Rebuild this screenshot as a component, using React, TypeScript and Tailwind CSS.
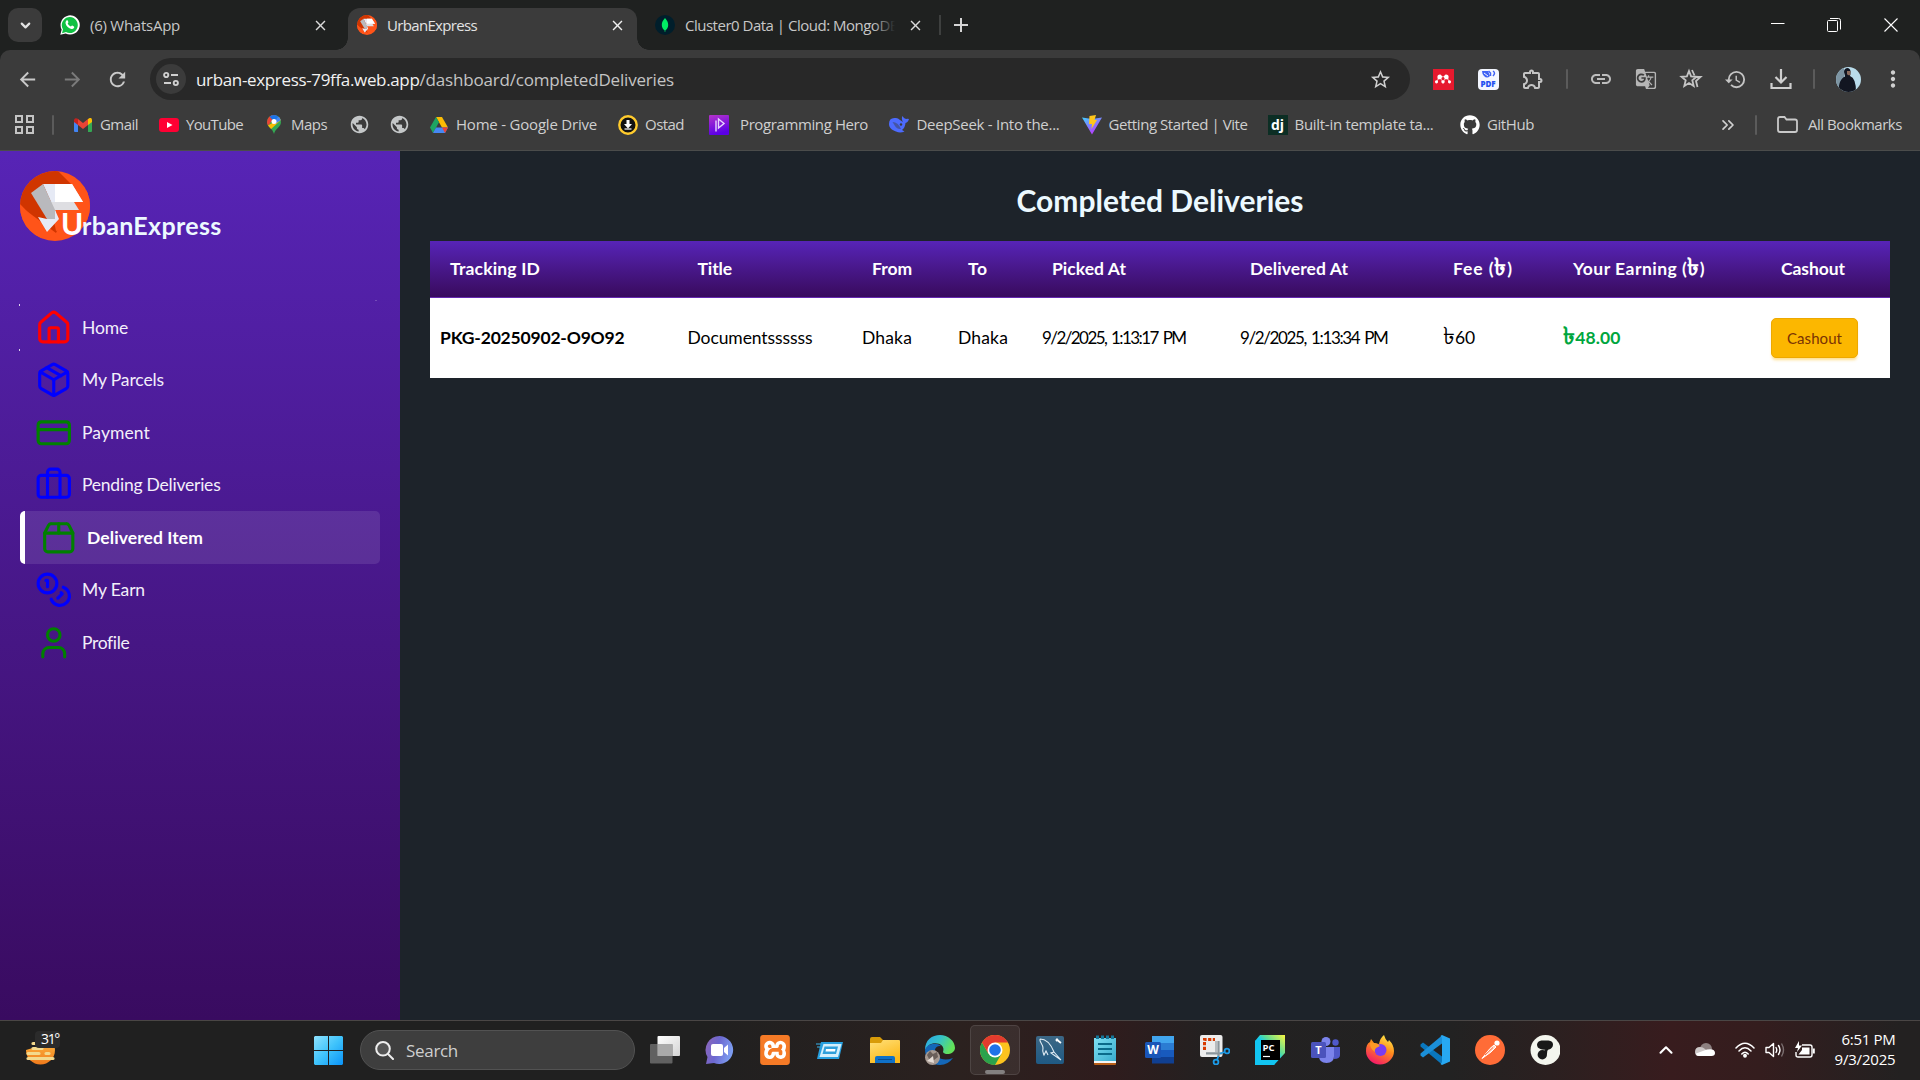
import { useLayoutEffect, useRef, type ReactNode } from "react";
import {
  Briefcase,
  ChevronDown,
  ChevronUp,
  ChevronsRight,
  CreditCard,
  House,
  Package,
  User,
} from "lucide-react";
import { FaGithub } from "react-icons/fa";
import {
  MdArrowBack,
  MdArrowForward,
  MdClose,
  MdHistory,
  MdLink,
  MdMoreVert,
  MdOutlineExtension,
  MdPublic,
  MdRefresh,
  MdStarBorder,
  MdGTranslate,
} from "react-icons/md";
import { SiMendeley, SiXampp } from "react-icons/si";

/** Single line of text whose letter spacing is adjusted so that it spans `w` pixels. */
function Fit({ w, className = "", children }: { w: number; className?: string; children: ReactNode }) {
  const ref = useRef<HTMLSpanElement>(null);
  useLayoutEffect(() => {
    const el = ref.current;
    if (!el) return;
    el.style.letterSpacing = "0px";
    const natural = el.getBoundingClientRect().width;
    const count = Math.max((el.textContent ?? "").length, 1);
    el.style.letterSpacing = `${(w - natural) / count}px`;
  }, [w]);
  return (
    <span className={`block shrink-0 whitespace-nowrap ${className}`} style={{ width: w }}>
      <span ref={ref} className="inline-block whitespace-pre">
        {children}
      </span>
    </span>
  );
}

function UrbanLogo({ size }: { size: number }) {
  return (
    <svg width={size} height={size} viewBox="0 0 70 70" className="block shrink-0">
      <defs>
        <clipPath id="urban-circle">
          <circle cx="35" cy="35" r="35" />
        </clipPath>
      </defs>
      <g clipPath="url(#urban-circle)">
        <rect width="70" height="70" fill="#ff5419" />
        <path d="M0 0H38L56 18L36 62L0 35Z" fill="#d03500" />
        <path d="M0 33L32 66L0 70Z" fill="#ff5419" />
        <path d="M30 31L36 60L70 50V20L54 16Z" fill="#ff5419" />
        <path d="M30 31H54L59 39H34Z" fill="#dedee2" />
        <path d="M23 13H52L63 31H31Z" fill="#e6eaf5" />
        <path d="M35 13H52L63 31H35Z" fill="#fff" />
        <path d="M11 22L23 13L36 41V48H27Z" fill="#b9b9bd" />
        <path d="M18 46L27 48H35V39L39 48L27 61Z" fill="#e6eaf5" />
      </g>
    </svg>
  );
}

/* ------------------------------ browser ------------------------------ */

function MongoIcon() {
  return (
    <svg width="20" height="20" viewBox="0 0 20 20" className="shrink-0">
      <circle cx="10" cy="10" r="10" fill="#001e2b" />
      <path d="M10 3c2 2.300 3.200 4.200 3.200 7 0 2.700-1.300 4.200-2.800 5.300L10.200 17h-.4l-.2-1.700C8.100 14.200 6.800 12.700 6.800 10c0-2.800 1.200-4.700 3.200-7z" fill="#00ed64" />
    </svg>
  );
}

function TabStrip() {
  return (
    <div className="flex h-[50px] items-end bg-[#1f2120] text-[15px]">
      <div className="mb-[8px] ml-[8px] flex h-[34px] w-[34px] shrink-0 items-center justify-center rounded-[10px] bg-[#3b3b3b]">
        <ChevronDown size={15} strokeWidth={3.5} color="#e3e3e3" />
      </div>
      <div className="flex h-[42px] w-[306px] items-center pb-[8px] pl-[18px]">
        <svg width="20" height="20" viewBox="0 0 20 20" className="shrink-0">
          <path d="M0.300 19.800L1.700 14.500A9.600 9.600 0 1 1 5.600 18.400Z" fill="#fff" />
          <path d="M2 18.200L3 14.300A8 8 0 1 1 6 17.100Z" fill="#10c143" />
          <path d="M6.500 5.400c.4-.4 1-.3 1.200.1l.7 1.600c.1.300 0 .6-.7 1.300.7 1.400 1.700 2.400 3.300 3.100.8-1 1-1 1.300-.9l1.600.8c.5.300.3 1.200 0 1.600-.5.700-1.500 1.100-2.400.9-3-.7-5.200-2.800-5.900-5.500-.3-1 .2-2.300.9-3z" fill="#fff" />
        </svg>
        <Fit w={90} className="ml-[10px] text-[#c7c7c7]">(6) WhatsApp</Fit>
        <MdClose size={17} color="#dadada" className="ml-[132px]" />
      </div>
      <div className="relative flex h-[42px] w-[289px] items-center rounded-t-[12px] bg-[#3b3b3b] pb-[8px] pl-[9px]">
        <span className="absolute -left-[12px] bottom-0 h-[12px] w-[12px] bg-[radial-gradient(circle_at_0_0,#1f2120_11.5px,#3b3b3b_12px)]" />
        <span className="absolute -right-[12px] bottom-0 h-[12px] w-[12px] bg-[radial-gradient(circle_at_100%_0,#1f2120_11.5px,#3b3b3b_12px)]" />
        <UrbanLogo size={20} />
        <Fit w={90} className="ml-[10px] text-[#e3e3e3]">UrbanExpress</Fit>
        <MdClose size={17} color="#f0f0f0" className="ml-[132px]" />
      </div>
      <div className="flex h-[42px] items-center pb-[8px] pl-[18px]">
        <MongoIcon />
        <div className="relative ml-[10px] w-[210px] overflow-hidden">
          <Fit w={214} className="text-[#c7c7c7]">{"Cluster0 Data | Cloud: MongoDB"}</Fit>
          <span className="absolute inset-y-0 right-0 w-[22px] bg-linear-to-r from-transparent to-[#1f2120]" />
        </div>
        <MdClose size={17} color="#dadada" className="ml-[12px]" />
        <span className="ml-[15px] h-[20px] w-[2px] bg-[#3e403f]" />
        <svg width="14" height="14" viewBox="0 0 14 14" className="ml-[13px]">
          <path d="M7 0V14M0 7H14" stroke="#d5d5d5" strokeWidth="2" />
        </svg>
      </div>
      <div className="mb-[18px] ml-auto mr-[22px] flex items-center">
        <svg width="14" height="14" viewBox="0 0 14 14">
          <path d="M0 5.500H13.500" stroke="#fff" />
        </svg>
        <svg width="14" height="14" viewBox="0 0 14 14" className="ml-[42px]" fill="none" stroke="#fff">
          <rect x="0.500" y="2.500" width="10" height="11" rx="1" />
          <path d="M3 0.500H11.500Q13.500 0.500 13.500 2.500V11.500" />
        </svg>
        <svg width="14" height="14" viewBox="0 0 14 14" className="ml-[43px]">
          <path d="M0.500 0.500L13.500 13.500M13.500 0.500L0.500 13.500" stroke="#fff" strokeWidth="1.100" />
        </svg>
      </div>
    </div>
  );
}

function Cell({ children }: { children?: ReactNode }) {
  return <span className="flex h-[42px] w-[45px] shrink-0 items-center justify-center">{children}</span>;
}

function Separator() {
  return (
    <span className="flex w-[22.5px] shrink-0 justify-center">
      <span className="h-[20px] w-[2px] rounded bg-[#5b5b5b]" />
    </span>
  );
}

function Toolbar() {
  return (
    <div className="bg-[#1f2120]">
      <div className="flex h-[58px] items-center rounded-t-[10px] bg-[#3b3b3b]">
        <div className="flex w-[150px] shrink-0 items-center">
          <MdArrowBack size={23} color="#c9c9c9" className="ml-[16px]" />
          <MdArrowForward size={23} color="#7b7b7b" className="ml-[22px]" />
          <MdRefresh size={23} color="#c9c9c9" className="ml-[22px]" />
        </div>
        <div className="flex h-[42px] w-[1260px] shrink-0 items-center rounded-full bg-[#282828] pl-[6px] pr-[18px]">
          <span className="flex h-[30px] w-[30px] items-center justify-center rounded-full bg-[#3b3b3b]">
            <svg width="16" height="16" viewBox="0 0 16 16" fill="none" stroke="#d0d0d0" strokeWidth="1.900">
              <circle cx="3.200" cy="4" r="2.100" />
              <path d="M8 4H15M1 12H8" />
              <circle cx="12.800" cy="12" r="2.100" />
            </svg>
          </span>
          <Fit w={223.5} className="ml-[10px] pt-px text-[17px] text-[#f1f1f1]">urban-express-79ffa.web.app</Fit>
          <Fit w={254.5} className="pt-px text-[17px] text-[#c4c4c4]">/dashboard/completedDeliveries</Fit>
          <MdStarBorder size={23} color="#d0d0d0" className="ml-auto" />
        </div>
        <div className="ml-[10.5px] flex items-center">
          <Cell>
            <span className="flex h-[21px] w-[21px] items-center justify-center bg-[#e6192e]">
              <SiMendeley size={16} color="#fff" />
            </span>
          </Cell>
          <Cell>
            <span className="flex h-[21px] w-[21px] flex-col items-center justify-end rounded-[4px] bg-[#f3f6ff] pb-[2px]">
              <svg width="17" height="9" viewBox="0 0 17 9">
                <path d="M2 1H8L10 6Q7 9 4 6Q2 4 2 1Z" fill="#3f62f4" />
                <path d="M4 3L8 6" stroke="#f3f6ff" strokeWidth="1" />
                <path d="M8.500 1L10.500 3V6M13 1Q16 3 13 6" stroke="#3f62f4" fill="none" strokeWidth="1.500" />
              </svg>
              <span className="text-[8px] leading-[9px] font-extrabold text-[#2450f0]">PDF</span>
            </span>
          </Cell>
          <Cell>
            <MdOutlineExtension size={24} color="#c4c4c4" />
          </Cell>
          <Separator />
          <Cell>
            <MdLink size={24} color="#bdbdbd" />
          </Cell>
          <Cell>
            <MdGTranslate size={22} color="#b5b5b5" />
          </Cell>
          <Cell>
            <svg width="24" height="22" viewBox="0 0 24 22" fill="none" stroke="#c4c4c4" strokeWidth="1.800">
              <path d="M10 3L12.100 8.400L17.500 8.800L13.300 12.300L14.700 18L10 15L5.300 18L6.700 12.300L2.500 8.800L7.900 8.400Z" />
              <path d="M13 2L15.500 7.500M16.500 9H21.500L17 13L18.500 19" />
            </svg>
          </Cell>
          <Cell>
            <MdHistory size={23} color="#c4c4c4" />
          </Cell>
          <Cell>
            <svg width="22" height="22" viewBox="0 0 22 22" fill="none" stroke="#cfcfcf" strokeWidth="2.200">
              <path d="M11 1V14M5.500 9L11 14.500L16.500 9M1.500 15V20H20.500V15" />
            </svg>
          </Cell>
          <Separator />
          <Cell>
            <svg width="25" height="25" viewBox="0 0 25 25">
              <defs>
                <clipPath id="avatar">
                  <circle cx="12.500" cy="12.500" r="12.500" />
                </clipPath>
              </defs>
              <g clipPath="url(#avatar)">
                <rect width="25" height="25" fill="#b9dceb" />
                <path d="M0 0H8V25H0Z" fill="#7d95a3" />
                <path d="M3 25C2 17 5 11 9 9.500L8 5Q8 1 12 1Q15 2 14.500 6L14 9Q20 11 20 25Z" fill="#121621" />
                <path d="M11 4H14.500V8Q12 9 11 7Z" fill="#8a6a5c" />
              </g>
            </svg>
          </Cell>
          <Cell>
            <MdMoreVert size={26} color="#cfcfcf" />
          </Cell>
        </div>
      </div>
    </div>
  );
}

function BookmarkBar() {
  const t = "text-[15px] text-[#cfcfcf]";
  return (
    <div className="flex h-[43px] items-center border-b border-[#4b4c4b] bg-[#3b3b3b] pb-[9px]">
      <svg width="19" height="19" viewBox="0 0 19 19" className="ml-[15px]" fill="none" stroke="#c4c4c4" strokeWidth="2">
        <rect x="1" y="1" width="6" height="6" />
        <rect x="12" y="1" width="6" height="6" />
        <rect x="1" y="12" width="6" height="6" />
        <rect x="12" y="12" width="6" height="6" />
      </svg>
      <span className="ml-[18px] h-[20px] w-[2px] rounded bg-[#5b5b5b]" />
      <svg width="18" height="14" viewBox="0 0 18 14" className="ml-[20px]">
        <path d="M0 2V13Q0 14 1 14H4V6Z" fill="#4285f4" />
        <path d="M18 2V13Q18 14 17 14H14V6Z" fill="#34a853" />
        <path d="M0 2Q.5-.8 3.300.6L4 1V7L0 4Z" fill="#c5221f" />
        <path d="M4 1L9 5L14 1V7L9 11L4 7Z" fill="#ea4335" />
        <path d="M14 1Q17-1.500 18 1.500V4L14 7Z" fill="#fbbc04" />
      </svg>
      <Fit w={38} className={`ml-[8px] ${t}`}>Gmail</Fit>
      <svg width="20" height="14" viewBox="0 0 20 14" className="ml-[21px]">
        <rect width="20" height="14" rx="3" fill="#ff0033" />
        <path d="M8 4V10L13.500 7Z" fill="#fff" />
      </svg>
      <Fit w={57} className={`ml-[7px] ${t}`}>YouTube</Fit>
      <svg width="14" height="19" viewBox="0 0 14 19" className="ml-[24px]">
        <defs>
          <clipPath id="pin">
            <path d="M7 0A7 7 0 0 1 14 7C14 12 8.500 13 7 19C5.500 13 0 12 0 7A7 7 0 0 1 7 0Z" />
          </clipPath>
        </defs>
        <g clipPath="url(#pin)">
          <rect width="14" height="19" fill="#34a853" />
          <path d="M0 12L9 1V-2H-2V12Z" fill="#ea4335" />
          <path d="M3 2L7 7L14 2V0H3Z" fill="#1a73e8" />
          <path d="M7 7L14 0V5L3 15L0 11Z" fill="#fbbc04" />
          <path d="M7 7L11 2L14 3V5L8 9Z" fill="#4285f4" />
        </g>
        <circle cx="7" cy="6.500" r="2.500" fill="#fff" />
      </svg>
      <Fit w={36} className={`ml-[10px] ${t}`}>Maps</Fit>
      <MdPublic size={21} color="#c4c7c8" className="ml-[21.5px] shrink-0" />
      <MdPublic size={21} color="#c4c7c8" className="ml-[19px] shrink-0" />
      <svg width="18" height="16" viewBox="0 0 18 16" className="ml-[20.5px]">
        <path d="M6 0H12L18 10.500H12Z" fill="#fbbc04" />
        <path d="M6 0L9 5.300L3 16L0 10.500Z" fill="#1da462" />
        <path d="M6 10.500H18L15 16H3Z" fill="#4688f4" />
        <path d="M12 10.500H18L15 16Z" fill="#ea4335" />
      </svg>
      <Fit w={141} className={`ml-[8px] ${t}`}>Home - Google Drive</Fit>
      <svg width="20" height="20" viewBox="0 0 20 20" className="ml-[21px]">
        <circle cx="10" cy="10" r="8.700" fill="#111" stroke="#ffcb2d" strokeWidth="2.400" />
        <path d="M8.500 5H11.500V9H14L10 13.500L6 9H8.500Z" fill="#fff" />
        <path d="M6.500 14H13.500" stroke="#fff" strokeWidth="1.200" />
      </svg>
      <Fit w={39} className={`ml-[7px] ${t}`}>Ostad</Fit>
      <svg width="20" height="20" viewBox="0 0 20 20" className="ml-[25px]">
        <defs>
          <linearGradient id="ph" x2="0.300" y2="1">
            <stop stopColor="#b534c9" />
            <stop offset="1" stopColor="#5a00e6" />
          </linearGradient>
        </defs>
        <rect width="20" height="20" rx="1" fill="url(#ph)" />
        <path d="M7 5.500V16.500M9.500 4L15 8.500L9.500 13Z" stroke="#e8d5ff" strokeWidth="1.400" fill="none" />
      </svg>
      <Fit w={128} className={`ml-[11px] ${t}`}>Programming Hero</Fit>
      <svg width="20" height="17" viewBox="0 0 20 17" className="ml-[21px]">
        <path d="M0 8Q0 1 7 2Q9 2 11 4L14 6Q12 3 13.500 0Q15 3 17 3Q18.500 2.500 20 3Q19 6.500 16.500 7Q16 12 13 14L15.500 15.500Q11 17.500 7 15.500C2 14 0 11 0 8Z" fill="#4d6bfe" />
        <path d="M3.500 6Q9 6 12 13Q8 13.500 6 10Z" fill="#3b3b3b" opacity=".45" />
        <circle cx="12" cy="8.500" r="1.200" fill="#3b3b3b" />
      </svg>
      <Fit w={143} className={`ml-[7.5px] ${t}`}>DeepSeek - Into the...</Fit>
      <svg width="20" height="20" viewBox="0 0 20 20" className="ml-[22px]">
        <defs>
          <linearGradient id="vite" x2="0.600" y2="1">
            <stop stopColor="#41d1ff" />
            <stop offset="1" stopColor="#bd34fe" />
          </linearGradient>
        </defs>
        <path d="M0 2.500L10 19.500L20 2.500L10 4Z" fill="url(#vite)" />
        <path d="M7.500 1L14 0L12.500 5H15L9.500 14L10 9H7Z" fill="#ffc61c" />
      </svg>
      <Fit w={139} className={`ml-[7px] ${t}`}>Getting Started | Vite</Fit>
      <span className="ml-[20px] flex h-5 w-5 shrink-0 items-center justify-center bg-[#0c2e24] text-[14px] leading-none font-bold text-white">dj</span>
      <Fit w={139} className={`ml-[7px] ${t}`}>Built-in template ta...</Fit>
      <FaGithub size={20} color="#fff" className="ml-[26px] shrink-0" />
      <Fit w={47} className={`ml-[7.5px] ${t}`}>GitHub</Fit>
      <ChevronsRight size={20} color="#d0d0d0" className="ml-auto shrink-0" />
      <span className="ml-[17px] h-[20px] w-[2px] rounded bg-[#5b5b5b]" />
      <svg width="21" height="17" viewBox="0 0 21 17" className="ml-[20px]" fill="none" stroke="#c9c9c9" strokeWidth="1.800">
        <path d="M1 3Q1 1 3 1H7.500L9.500 3.500H18Q20 3.500 20 5.500V14Q20 16 18 16H3Q1 16 1 14Z" />
      </svg>
      <Fit w={94} className={`mr-[18px] ml-[10px] ${t}`}>All Bookmarks</Fit>
    </div>
  );
}

/* ------------------------------ dashboard ------------------------------ */

function PackageBoxIcon() {
  return (
    <svg width="37.500" height="37.500" viewBox="0 0 24 24" fill="none" stroke="green" strokeWidth="2" strokeLinecap="round" strokeLinejoin="round">
      <path d="M3 9h18v10a2 2 0 0 1-2 2H5a2 2 0 0 1-2-2V9Z" />
      <path d="m3 9 2.450-4.900A2 2 0 0 1 7.240 3h9.520a2 2 0 0 1 1.800 1.100L21 9" />
      <path d="M12 3v6" />
    </svg>
  );
}

function CoinsIcon() {
  return (
    <svg width="37.500" height="37.500" viewBox="0 0 24 24" fill="none" stroke="blue" strokeWidth="2" strokeLinecap="round" strokeLinejoin="round">
      <circle cx="8" cy="8" r="6" />
      <path d="M18.090 10.370A6 6 0 1 1 10.340 18" />
      <path d="M7 6h1v4" />
      <path d="m16.710 13.880.7.710-2.820 2.820" />
    </svg>
  );
}

const menu = [
  { label: "Home", w: 46, icon: <House size={37.5} color="red" /> },
  { label: "My Parcels", w: 82, icon: <Package size={37.5} color="blue" /> },
  { label: "Payment", w: 68, icon: <CreditCard size={37.5} color="green" /> },
  { label: "Pending Deliveries", w: 138.5, icon: <Briefcase size={37.5} color="blue" /> },
  { label: "Delivered Item", w: 116, icon: <PackageBoxIcon />, active: true },
  { label: "My Earn", w: 63, icon: <CoinsIcon /> },
  { label: "Profile", w: 47, icon: <User size={37.5} color="green" /> },
];

function Sidebar() {
  return (
    <aside className="w-[400px] shrink-0 bg-linear-to-b from-[#5724b6] to-[#390b60] px-[20px] pt-[20px]">
      <div className="flex h-[130px] items-start">
        <UrbanLogo size={70} />
        <div className="relative -ml-[29px] flex items-baseline pt-[34px] font-bold text-[#ecf9ff]">
          <Fit w={21} className="text-[30px] leading-[36px] text-white">U</Fit>
          <Fit w={139.5} className="text-[25px] leading-[36px]">rbanExpress</Fit>
        </div>
      </div>
      <nav className="relative">
        <span className="absolute -left-[1px] top-[3px] h-[2px] w-px bg-white/80" />
        <span className="absolute -left-[1px] top-[48px] h-[2px] w-px bg-white/80" />
        <span className="absolute -top-px left-[355px] h-px w-[2px] bg-white/20" />
        {menu.map((m) => (
          <div
            key={m.label}
            className={
              m.active
                ? "flex h-[52.5px] items-center rounded-[5px] border-l-[5px] border-white bg-white/10 pl-[15px] font-bold text-white"
                : "flex h-[52.5px] items-center pl-[15px] text-[#f3effa]"
            }
          >
            {m.icon}
            <Fit w={m.w} className="ml-[9.5px] pt-px text-[17.5px]">{m.label}</Fit>
          </div>
        ))}
      </nav>
    </aside>
  );
}

function Taka() {
  return <span className="inline-block align-baseline text-[24px] leading-[0]">৳</span>;
}

function Dashboard() {
  const th = "border-b border-[#6528b0] pl-[20px] text-left align-middle font-bold";
  const td = "pl-[10px] align-middle";
  return (
    <main className="w-[1520px] bg-[#1d232a] px-[30px] pt-[30px]">
      <h2 className="flex h-[60px] justify-center text-[30px] leading-[38px] font-bold text-[#ecf9ff]">
        <Fit w={287}>Completed Deliveries</Fit>
      </h2>
      <table className="w-full table-fixed border-separate border-spacing-0 text-[17.5px] leading-[22px]">
        <colgroup>
          <col className="w-[247.5px]" />
          <col className="w-[174.5px]" />
          <col className="w-[96px]" />
          <col className="w-[84px]" />
          <col className="w-[198px]" />
          <col className="w-[203px]" />
          <col className="w-[120px]" />
          <col className="w-[208px]" />
          <col className="w-[129px]" />
        </colgroup>
        <thead className="bg-linear-to-b from-[#5724b8] to-[#380a5c] text-white">
          <tr className="h-[57px]">
            <th className={th}><Fit w={90}>Tracking ID</Fit></th>
            <th className={th}><Fit w={34.5}>Title</Fit></th>
            <th className={th}><Fit w={40}>From</Fit></th>
            <th className={th}><Fit w={19.5}>To</Fit></th>
            <th className={th}><Fit w={74}>Picked At</Fit></th>
            <th className={th}><Fit w={98}>Delivered At</Fit></th>
            <th className={th}><Fit w={60}>Fee (<Taka />)</Fit></th>
            <th className={th}><Fit w={132}>Your Earning (<Taka />)</Fit></th>
            <th className={th}><Fit w={64}>Cashout</Fit></th>
          </tr>
        </thead>
        <tbody>
          <tr className="h-[80px] bg-white text-black">
            <td className={`${td} font-bold`}><Fit w={184.5}>PKG-20250902-O9O92</Fit></td>
            <td className={td}><Fit w={125}>Documentssssss</Fit></td>
            <td className={td}><Fit w={50}>Dhaka</Fit></td>
            <td className={td}><Fit w={50}>Dhaka</Fit></td>
            <td className={td}><Fit w={143.5} className="text-[17px] [word-spacing:2px]">9/2/2025, 1:13:17 PM</Fit></td>
            <td className={td}><Fit w={147.5} className="text-[17px] [word-spacing:2px]">9/2/2025, 1:13:34 PM</Fit></td>
            <td className={td}><Fit w={32}><Taka />60</Fit></td>
            <td className={`${td} font-bold text-[#00a63e]`}><Fit w={57.5}><Taka />48.00</Fit></td>
            <td className={td}>
              <button className="flex h-[40px] w-[87px] items-center justify-center rounded-[5px] border border-[#eda800] bg-[#fcb700] text-[15px] text-[#793205] shadow-[0_3px_3px_-1px_rgba(252,183,0,0.45)]">
                <Fit w={55}>Cashout</Fit>
              </button>
            </td>
          </tr>
        </tbody>
      </table>
    </main>
  );
}

/* ------------------------------ taskbar ------------------------------ */

function TaskIcon({ children, active }: { children: ReactNode; active?: boolean }) {
  return (
    <span className="flex w-[55px] shrink-0 items-center justify-center">
      <span
        className={
          active
            ? "relative flex h-[50px] w-[50px] items-center justify-center rounded-[5px] border border-white/10 bg-white/7"
            : "flex h-[50px] w-[50px] items-center justify-center"
        }
      >
        <svg width="30" height="30" viewBox="0 0 30 30">{children}</svg>
        {active && <span className="absolute bottom-0 h-[4px] w-[20px] rounded-full bg-[#838080]" />}
      </span>
    </span>
  );
}

function TaskIcons() {
  return (
    <div className="ml-[2.5px] flex items-center">
      <svg width="0" height="0" className="absolute">
        <defs>
          <linearGradient id="tv" x2="1" y2="1"><stop stopColor="#fff" /><stop offset="1" stopColor="#d4d4d4" /></linearGradient>
          <linearGradient id="chat" x1="0" y1="0" x2="1" y2="0.300"><stop stopColor="#8f66b8" /><stop offset=".5" stopColor="#6c67cf" /><stop offset="1" stopColor="#7c9bf0" /></linearGradient>
          <linearGradient id="fold" x2="0.500" y2="1"><stop stopColor="#ffe07a" /><stop offset="1" stopColor="#fcb91a" /></linearGradient>
          <linearGradient id="edge" x2="1" y2="0.400"><stop stopColor="#2aa5e8" /><stop offset=".5" stopColor="#35c1c9" /><stop offset="1" stopColor="#62e25a" /></linearGradient>
          <linearGradient id="mysql" x2="0" y2="1"><stop stopColor="#3c6785" /><stop offset="1" stopColor="#1f5a84" /></linearGradient>
          <linearGradient id="note" x2="1" y2="1"><stop stopColor="#7fe0f3" /><stop offset="1" stopColor="#35a9cc" /></linearGradient>
          <linearGradient id="pyc" x1="0" y1="1" x2="1" y2="0"><stop offset=".5" stopColor="#12cdf0" /><stop offset=".65" stopColor="#5fdc96" /><stop offset="1" stopColor="#fcf840" /></linearGradient>
          <linearGradient id="fox" x1="0.800" y1="0" x2="0.300" y2="1"><stop stopColor="#fff04a" /><stop offset=".45" stopColor="#ff8a1c" /><stop offset="1" stopColor="#f4156b" /></linearGradient>
        </defs>
      </svg>
      <TaskIcon>
        <rect x="7.500" y="1" width="22.500" height="20" rx="1" fill="url(#tv)" />
        <rect y="9" width="22.500" height="19.500" rx="1" fill="#6d6d6d" opacity=".85" />
        <rect x="7.500" y="9" width="15" height="12" fill="#aaa" />
      </TaskIcon>
      <TaskIcon>
        <path d="M15 1A14 14 0 1 1 9 28L1 29L2.500 22A14 14 0 0 1 15 1Z" fill="url(#chat)" />
        <rect x="6" y="9" width="12" height="12" rx="2" fill="#fff" />
        <path d="M19 13L23 9.500V20.500L19 17Z" fill="#fff" />
      </TaskIcon>
      <TaskIcon>
        <rect x="2" y="2" width="26" height="26" fill="#fff" />
        <SiXampp size={30} color="#f57a26" />
      </TaskIcon>
      <TaskIcon>
        <path d="M6 7H28L24 24H2Z" fill="#27a0e0" />
        <path d="M8.500 9H26.500L23 22H4.500Z" fill="#d3effc" />
        <path d="M9.500 11.500H23L21 19H7.500Z" fill="#2f9fda" />
        <path d="M11 14H20.500L20 16.500H10.500Z" fill="#fff" />
        <path d="M1 9H6M2 12H5" stroke="#38b5ef" />
      </TaskIcon>
      <TaskIcon>
        <path d="M0 4Q0 2 2 2H10L13 5V9H0Z" fill="#d89b09" />
        <path d="M0 8H11L13 5H29Q30 5 30 6V28H0Z" fill="url(#fold)" />
        <path d="M5 28V23Q5 21 7 21H23Q25 21 25 23V28Z" fill="#0f71c8" />
        <path d="M8 24.500H22" stroke="#0a4c8f" />
      </TaskIcon>
      <TaskIcon>
        <path d="M0 15C0 5 7 0 15 0S30 6 30 13C30 19 20 21 18 17C21 9 10 6 4 10Z" fill="url(#edge)" />
        <path d="M0 15C2 8 12 7 16 11C10 10 8 16 12 21Q18 27 28 23Q23 30 15 30C7 30 0 24 0 15Z" fill="#1467b8" />
        <circle cx="7.500" cy="22.500" r="7.500" fill="#a79a92" />
        <path d="M2 20L5 16L8 19L12 17L13 22L9 25L4 24Z" fill="#6a5f5a" />
        <path d="M2 26L8 21L9 28Z" fill="#e6ddd6" />
      </TaskIcon>
      <TaskIcon active>
        <circle cx="15" cy="15" r="15" fill="#fcc31e" />
        <path d="M2 7.500A15 15 0 0 0 15 30L21.500 18.700L15 15L8.500 18.700Z" fill="#2ba24c" />
        <path d="M2 7.500A15 15 0 0 1 28 7.500H15L8.500 18.700Z" fill="#e33b2e" />
        <circle cx="15" cy="15" r="7.500" fill="#fff" />
        <circle cx="15" cy="15" r="5.800" fill="#1f72e8" />
      </TaskIcon>
      <TaskIcon>
        <rect x="1" y="1" width="28" height="28" rx="2" fill="url(#mysql)" />
        <path d="M5 4C13 4 17 12 19 17L26 25M5 4C4 7 8 9 8 13C7 17 8 18 9 20L11 16L13 20M19 17L16 18L26 25" fill="none" stroke="#e2edf5" strokeWidth="1.100" />
        <path d="M21 4L26 8M21 6L23 4" stroke="#fff" strokeWidth="1.800" />
      </TaskIcon>
      <TaskIcon>
        <rect x="4" y="25" width="22" height="5" rx="1" fill="#b95f18" />
        <rect x="4" y="3" width="22" height="25" fill="url(#note)" />
        <path d="M4 27H26" stroke="#f5f5f5" strokeWidth="2" />
        <path d="M8 9H22M8 14H22M8 19H22" stroke="#0a6a8a" strokeWidth="1.800" />
        <path d="M7.500 .5V4M12.500 .5V4M17.500 .5V4M22.500 .5V4" stroke="#14779a" strokeWidth="3" />
      </TaskIcon>
      <TaskIcon>
        <rect x="7" y="1" width="22" height="7" fill="#41a5ee" />
        <rect x="7" y="8" width="22" height="7" fill="#2b7cd3" />
        <rect x="7" y="15" width="22" height="7" fill="#185abd" />
        <rect x="7" y="22" width="22" height="6.500" fill="#103f91" />
        <rect x="0" y="7" width="16" height="16" rx="1.500" fill="#1a56b8" />
        <text x="8" y="19.200" textAnchor="middle" fontSize="12" fontWeight="700" fill="#fff">W</text>
      </TaskIcon>
      <TaskIcon>
        <rect width="22.500" height="22" rx="2" fill="#ececec" />
        <path d="M4.500 15V4.500H15" fill="none" stroke="#d83b01" strokeWidth="3" strokeDasharray="3.200 1.500" />
        <path d="M16 6V18H6" fill="none" stroke="#b8bcc0" strokeWidth="2" />
        <path d="M18.500 6V22M6 18.500H23" stroke="#8b959b" strokeWidth="2.200" />
        <circle cx="27" cy="16" r="2.400" fill="none" stroke="#1c9be8" strokeWidth="1.800" />
        <circle cx="16" cy="27" r="2.400" fill="none" stroke="#1c9be8" strokeWidth="1.800" />
        <path d="M20 18.500L25 17M18.500 21L17 25" stroke="#1c9be8" strokeWidth="1.800" />
      </TaskIcon>
      <TaskIcon>
        <path d="M5 0H30V18L19 30H0V6Z" fill="url(#pyc)" />
        <path d="M0 6L5 3V24L22 25L19 30H0Z" fill="#12c5f2" />
        <rect x="6" y="5" width="19" height="20" fill="#000" />
        <text x="7.500" y="15.500" fontSize="9.500" fontWeight="700" fill="#fff">PC</text>
        <path d="M8 21.500H15" stroke="#fff" strokeWidth="1.200" />
      </TaskIcon>
      <TaskIcon>
        <circle cx="25.500" cy="7.500" r="3.200" fill="#5059c9" />
        <path d="M21 12H30V20Q30 24 24 24Z" fill="#5059c9" />
        <circle cx="16" cy="6.500" r="4.500" fill="#7b83eb" />
        <path d="M9 12H24V21Q24 28 16.500 28Q9 28 9 21Z" fill="#7b83eb" />
        <rect x="1" y="7" width="15" height="16" rx="1.500" fill="#4b53bc" />
        <text x="8.500" y="19" textAnchor="middle" fontSize="11" fontWeight="700" fill="#fff">T</text>
      </TaskIcon>
      <TaskIcon>
        <path d="M6 4L9 8L14 9Q15 3 19 0Q20 4 23 7L24 5Q29 10 29 16A14 13.500 0 0 1 1 16Q1 9 5 7Z" fill="url(#fox)" />
        <circle cx="15.500" cy="15" r="6" fill="#7a3cf0" />
        <path d="M5 8Q11 7 15 11L11 13Q9 15 10 17Q5 14 5 8Z" fill="#ff9a24" />
      </TaskIcon>
      <TaskIcon>
        <path d="M0.500 9.500L3 7.500L22 21.500V29.500L0.500 11.500Z" fill="#0a77bd" />
        <path d="M0.500 20.500L3 22.500L22 8.500V0.500L0.500 18.500Z" fill="#1b8fd8" />
        <path d="M22 0L30 3.500V26.500L22 30L20.500 29Q22 28 22 26V4Q22 2 20.500 1Z" fill="#27a8f2" />
      </TaskIcon>
      <TaskIcon>
        <circle cx="15" cy="15" r="15" fill="#ff6c37" />
        <path d="M7 23.500L15 13.500L19 10L21 12L16 17Z" fill="#ffd9cb" stroke="#fff" strokeWidth="1" />
        <path d="M10 20L18 12.500" stroke="#ff6c37" strokeWidth="1" />
        <circle cx="22" cy="8" r="2.600" fill="#fff" />
      </TaskIcon>
      <TaskIcon>
        <circle cx="15.500" cy="15" r="15" fill="#f4f6ee" />
        <path d="M11.500 5.500H18.500Q23 6 23 9.500Q23 13 19 14.500Q12 15 10.500 14Q7 13 7 9.500Q7.500 6 11.500 5.500Z" fill="#191919" />
        <path d="M15.500 14H18.500Q16.500 16 17 19H12Z" fill="#191919" />
        <circle cx="12.300" cy="19.700" r="4.700" fill="#191919" />
      </TaskIcon>
    </div>
  );
}

function Taskbar() {
  return (
    <div className="flex h-[60px] items-center border-t border-[#4a4645] bg-[linear-gradient(90deg,#202020_0px,#202020_700px,#2b211f_960px,#2f1c1d_1110px,#232121_1210px,#222222_1450px,#2b2020_1550px,#381c1e_1670px,#341d1e_1760px,#232121_1900px)] pb-px text-white">
      <div className="relative mb-[5px] ml-[26px] h-[34px] w-[36px] shrink-0">
        <svg width="36" height="34" viewBox="0 0 36 34">
          <defs>
            <linearGradient id="sun" x2="0" y2="1"><stop stopColor="#ffc447" /><stop offset="1" stopColor="#f07a1c" /></linearGradient>
            <clipPath id="sun-clip"><path d="M0 19L10 16L36 14V34H0Z" /></clipPath>
          </defs>
          <circle cx="14.500" cy="19" r="14.500" fill="url(#sun)" clipPath="url(#sun-clip)" />
          <path d="M7 12.500H10M7 17.500H16M2 22.500H13M20 22.500H23M2 27.500H27" stroke="#f3d98c" strokeWidth="3.200" strokeLinecap="round" />
        </svg>
        <span className="absolute top-0 left-[9px] flex h-[17px] w-[25px] items-center justify-end rounded bg-[#2b2b2b] pr-px">
          <Fit w={18} className="text-[14px] leading-none">31°</Fit>
        </span>
      </div>
      <svg width="29" height="29" viewBox="0 0 29 29" className="ml-[252px] shrink-0">
        <defs>
          <linearGradient id="win" x2="1" y2="1"><stop stopColor="#8fe3ff" /><stop offset=".5" stopColor="#3fc3fb" /><stop offset="1" stopColor="#0a93f8" /></linearGradient>
        </defs>
        <path d="M1 0H14V14H0V1ZM15 0H28L29 1V14H15ZM0 15H14V29H1L0 28ZM15 15H29V28L28 29H15Z" fill="url(#win)" />
      </svg>
      <div className="ml-[17px] flex h-[40px] w-[275px] shrink-0 items-center rounded-full border border-[#525252] bg-[#3e3e3e] pl-[14px]">
        <svg width="19" height="19" viewBox="0 0 19 19" fill="none" stroke="#eee" strokeWidth="2">
          <circle cx="8" cy="7.800" r="6.800" fill="#555" />
          <path d="M13 13L18 18" strokeLinecap="round" />
        </svg>
        <Fit w={52} className="ml-[12px] pt-px text-[17px] text-[#cfcfcf]">Search</Fit>
      </div>
      <TaskIcons />
      <div className="ml-auto flex items-center pr-[24.5px]">
        <ChevronUp size={22} strokeWidth={2.3} />
        <svg width="20" height="14" viewBox="0 0 20 14" className="ml-[18px]">
          <circle cx="11" cy="6" r="6" fill="#8d8080" />
          <path d="M0 9Q0 4 5 4Q8 4 10 6L17 12L4 13Q0 13 0 9Z" fill="#cdc8c8" />
          <path d="M4 13Q1 13 1 10.500L12 6.500Q20 5 20 10Q20 13 16.500 13Z" fill="#fff" />
        </svg>
        <svg width="20" height="16" viewBox="0 0 20 16" className="ml-[20px]" fill="none" stroke="#fff" strokeWidth="1.500" strokeLinecap="round">
          <path d="M1 6Q10-3.500 19 6M4 9Q10 2.500 16 9M6.800 12Q10 8.500 13.200 12" />
          <circle cx="10" cy="13.800" r="1.200" fill="#fff" />
        </svg>
        <svg width="20" height="16" viewBox="0 0 20 16" className="ml-[10px]" fill="none" stroke="#fff" strokeWidth="1.400">
          <path d="M1 5.500H4L8.500 1.500V14.500L4 10.500H1Z" strokeLinejoin="round" />
          <path d="M11 5.500Q12.500 8 11 10.500M13.500 3.500Q16.500 8 13.500 12.500" strokeLinecap="round" />
          <path d="M16.500 1.500Q20.500 8 16.500 14.500" stroke="#7b6f70" />
        </svg>
        <svg width="20" height="17" viewBox="0 0 20 17" className="mb-[2px] ml-[10px]" fill="none" stroke="#fff" strokeWidth="1.400">
          <path d="M7 4H15Q17 4 17 6V14Q17 16 15 16H3Q1 16 1 14V11" />
          <path d="M7 6.500H14.500V13.500H3.500L7 9Z" fill="#fff" stroke="none" />
          <path d="M18.800 7.500V12.500" strokeWidth="2" />
          <path d="M4 0L0 7H3L2 11L7 4.500H4Z" fill="#fff" stroke="none" />
        </svg>
        <div className="mb-[2px] ml-[20px] flex flex-col items-end text-[15px] leading-[20px]">
          <Fit w={54}>6:51 PM</Fit>
          <Fit w={61}>9/3/2025</Fit>
        </div>
      </div>
    </div>
  );
}

export default function App() {
  return (
    <div className="flex h-[1080px] w-[1920px] flex-col overflow-hidden font-['Open_Sans',sans-serif]">
      <header className="shrink-0">
        <TabStrip />
        <Toolbar />
        <BookmarkBar />
      </header>
      <div className="flex min-h-0 flex-1 font-[Lato,'Noto_Sans',sans-serif]">
        <Sidebar />
        <Dashboard />
      </div>
      <Taskbar />
    </div>
  );
}
